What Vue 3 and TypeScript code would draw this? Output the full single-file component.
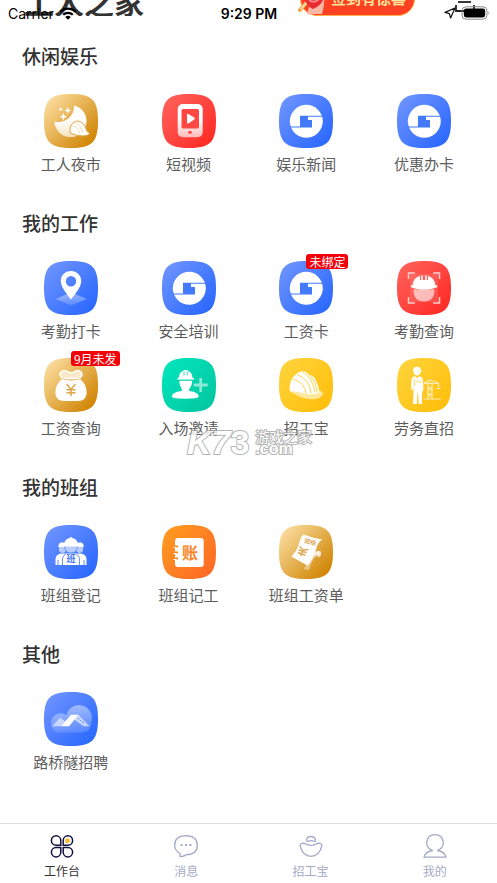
<script setup lang="ts">
import { ref } from 'vue'

type Tone = 'gold' | 'red' | 'blue' | 'teal' | 'yellow' | 'orange'

interface Entry {
  label: string
  icon: string
  tone: Tone
  badge?: string
}

interface Section {
  title: string
  entries: Entry[]
}

const sections: Section[] = [
  {
    title: '休闲娱乐',
    entries: [
      { label: '工人夜市', icon: 'moon', tone: 'gold' },
      { label: '短视频', icon: 'video', tone: 'red' },
      { label: '娱乐新闻', icon: 'brand', tone: 'blue' },
      { label: '优惠办卡', icon: 'brand', tone: 'blue' },
    ],
  },
  {
    title: '我的工作',
    entries: [
      { label: '考勤打卡', icon: 'pin', tone: 'blue' },
      { label: '安全培训', icon: 'brand', tone: 'blue' },
      { label: '工资卡', icon: 'brand', tone: 'blue', badge: '未绑定' },
      { label: '考勤查询', icon: 'scan', tone: 'red' },
      { label: '工资查询', icon: 'bag', tone: 'gold', badge: '9月未发' },
      { label: '入场邀请', icon: 'invite', tone: 'teal' },
      { label: '招工宝', icon: 'helmet', tone: 'yellow' },
      { label: '劳务直招', icon: 'worker', tone: 'yellow' },
    ],
  },
  {
    title: '我的班组',
    entries: [
      { label: '班组登记', icon: 'team', tone: 'blue' },
      { label: '班组记工', icon: 'ledger', tone: 'orange' },
      { label: '班组工资单', icon: 'payslip', tone: 'gold' },
    ],
  },
  {
    title: '其他',
    entries: [{ label: '路桥隧招聘', icon: 'bridge', tone: 'blue' }],
  },
]

const tones: { name: Tone; from: string; to: string }[] = [
  { name: 'gold', from: '#fbdd9f', to: '#d08402' },
  { name: 'red', from: '#ff6059', to: '#ff2c27' },
  { name: 'blue', from: '#6d93ff', to: '#2b69ff' },
  { name: 'teal', from: '#02e5bd', to: '#04c7a0' },
  { name: 'yellow', from: '#ffd33a', to: '#ffbf0d' },
  { name: 'orange', from: '#ff9a1f', to: '#ff6a26' },
]

const tabs = [
  { id: 'desk', label: '工作台' },
  { id: 'message', label: '消息' },
  { id: 'hire', label: '招工宝' },
  { id: 'mine', label: '我的' },
]

const active = ref('desk')
</script>

<template>
  <div class="app">
    <svg class="defs" width="0" height="0" aria-hidden="true">
      <defs>
        <linearGradient v-for="t in tones" :id="'tone-' + t.name" :key="t.name" x1="0.05" y1="0.1" x2="0.9" y2="0.9">
          <stop offset="0" :stop-color="t.from" />
          <stop offset="1" :stop-color="t.to" />
        </linearGradient>
        <linearGradient id="fade-down" x1="0" y1="0" x2="0" y2="1">
          <stop offset="0.45" stop-color="#fff" />
          <stop offset="1" stop-color="#fff" stop-opacity="0.65" />
        </linearGradient>
        <linearGradient id="fade-up" x1="0" y1="0" x2="0" y2="1">
          <stop offset="0" stop-color="#fff" stop-opacity="0.45" />
          <stop offset="1" stop-color="#fff" stop-opacity="0.15" />
        </linearGradient>
      </defs>
    </svg>

    <div class="status">
      <div class="carrier">
        <span>Carrier</span>
        <svg width="18" height="13" viewBox="0 0 18 13" fill="none" stroke="#000" stroke-width="2.2">
          <path d="M1.3 4.8a11 11 0 0 1 15.4 0" />
          <path d="M4.2 7.8a7 7 0 0 1 9.6 0" />
          <path d="M9 12.8 6.2 10a4 4 0 0 1 5.6 0Z" fill="#000" stroke="none" />
        </svg>
      </div>
      <strong class="clock">9:29 PM</strong>
      <div class="power">
        <svg width="12" height="12" viewBox="0 0 12 12" fill="none" stroke="#111" stroke-width="1.2" stroke-linejoin="round">
          <path d="M11 1 6.6 11 5.4 6.6 1 5.4Z" />
        </svg>
        <svg width="29" height="14" viewBox="0 0 29 14">
          <rect x="1" y="0.8" width="25" height="12.4" rx="4" fill="none" stroke="#888" />
          <rect x="2.8" y="2.6" width="21.4" height="8.8" rx="2.4" fill="#000" />
          <path d="M27.600 5q1.600 2 0 4Z" fill="#888" />
        </svg>
      </div>
    </div>

    <header class="hero">
      <h1>工人之家</h1>
      <a class="checkin" href="#checkin">
        <svg class="hand" width="30" height="32" viewBox="0 0 30 32" aria-hidden="true">
          <path d="m2 27 8-9" stroke="#f0a64a" stroke-width="4" stroke-linecap="round" />
          <path d="m3 26 6-7" stroke="#ffe9bd" stroke-width="1.5" stroke-linecap="round" />
          <path d="M9 31q2-10 7-14l10-5q1 9-2 19Z" fill="#f7b9a4" />
          <path d="M6 16q8-6 10-2 8-4 10 1-3 8-11 11-5-2-9-10Z" fill="#e92c32" />
          <path d="M11 17q5 4 10-1" stroke="#ff8582" stroke-width="2" fill="none" />
        </svg>
        <span>签到有惊喜</span>
      </a>
      <a class="scan-link" href="#scan" aria-label="扫一扫">
        <svg width="20" height="20" viewBox="0 0 20 20" fill="none" stroke="#222" stroke-width="1.800">
          <path d="M3 6h13" />
          <path d="M1 9v6h8M19 9v4" />
        </svg>
      </a>
    </header>

    <main class="content">
      <section v-for="section in sections" :key="section.title" class="section">
        <h2>{{ section.title }}</h2>
        <div class="grid">
          <a v-for="entry in section.entries" :key="entry.label" class="entry" href="#entry">
            <svg class="tile" viewBox="0 0 54 54" aria-hidden="true">
              <path d="M27 0C48 0 54 6 54 27S48 54 27 54 0 48 0 27 6 0 27 0Z" :fill="`url(#tone-${entry.tone})`" />

              <g v-if="entry.icon === 'moon'">
                <path d="M30 11.5A16 16 0 1 1 10.5 27.500A15.500 15.500 0 0 0 30 11.500Z" fill="url(#fade-down)" />
                <path d="m16.700 13 .7 1.600 1.600.7-1.600.7-.7 1.600-.7-1.600-1.600-.7 1.600-.7ZM23.800 13l1 2.400 2.400 1-2.400 1-1 2.400-1-2.400-2.400-1 2.400-1ZM19.400 19l1.100 2.600 2.600 1.100-2.600 1.100-1.100 2.600-1.100-2.600-2.600-1.100 2.600-1.100Z" fill="#fff" />
                <path d="M26.200 39C25.200 32 28.500 27.500 33.500 27q6.500 0 9.500 10.500 2.500.8 2.300 2-1 2.600-7.300 2.400-6-.2-11.800-2.900Z" fill="#fff" stroke="#dfa544" />
                <path d="M29 32q6 1.500 7 8M32 29q5.500 3 6.500 9.500" fill="none" stroke="#eccb8f" stroke-width=".7" />
              </g>

              <g v-else-if="entry.icon === 'video'">
                <rect x="15.700" y="10" width="25" height="33.300" rx="5" fill="url(#fade-down)" />
                <rect x="19.500" y="15" width="17.500" height="19.500" rx="1.500" fill="#ff4842" />
                <path d="M25 21.200q0-2 1.800-1l5.400 3.400q1.300 1 0 2l-5.400 3.600q-1.800 1-1.800-1Z" fill="#fff" />
                <ellipse cx="28" cy="38.400" rx="2" ry="1.300" fill="#ff4842" />
              </g>

              <g v-else-if="entry.icon === 'brand'">
                <circle cx="27.300" cy="27.300" r="16.500" fill="#fff" />
                <path d="M21 21.800h23v.9H29V26h4v7.500H11v-.9H21Z" fill="#4379fb" />
              </g>

              <g v-else-if="entry.icon === 'pin'">
                <path d="m27 31.500 15.800 6.500L27 44.500 11.500 38Z" fill="url(#fade-up)" />
                <path fill-rule="evenodd" d="M27 10c6 0 10.200 4.500 10.200 10 0 6-5.200 12-10.200 18.500C22 32 16.800 26 16.800 20 16.800 14.500 21 10 27 10Zm0 5a5.200 5.200 0 1 0 0 10.400A5.200 5.200 0 0 0 27 15Z" fill="#fff" />
              </g>

              <g v-else-if="entry.icon === 'scan'">
                <rect x="13" y="13" width="28" height="28" fill="#fff" opacity=".12" />
                <path d="M11.500 18v-6H18M36 12h6.500v6M42.500 36v6H36M18 42h-6.500v-6" fill="none" stroke="#ffd0cd" stroke-width="1.500" />
                <path d="M16.500 28.500h21Q37.500 40.500 27 40.500T16.500 28.500Z" fill="#fff" opacity=".6" />
                <path d="M13.500 25.500q0-1.200 2.200-1.500.3-7 7.300-9v4h1.200v-4.500h1.600V19h2.400v-4.500h1.600V19H31v-4q6.700 2 7.300 9 2.200.3 2.200 1.500-.5 1-3 1.500-3.500 1.700-10.500 1.700T16.500 27q-2.500-.5-3-1.500Z" fill="#fff" />
              </g>

              <g v-else-if="entry.icon === 'bag'">
                <path d="M18.500 20.500q-4-3.500-1.500-6.500 3.500-3 7 0 3 1.400 6 0 3.500-3 7 0 2.500 3-1.500 6.500Z" fill="#fbe8c8" stroke="#fff" stroke-width="1.500" />
                <path d="M18.500 20.500q8.500 2.500 17 0 7.200 5.500 7.200 14 0 8.500-9.200 8.500H20.500q-9.200 0-9.200-8.500 0-8.500 7.200-14Z" fill="#fff" />
                <path d="M18 20.800q9 3 18 0" fill="none" stroke="#e9c382" stroke-width="1" />
                <path d="m22.600 26 4.400 5.400 4.400-5.400M27 31.500v6.500M22.500 31.800h9M22.500 34.800h9" fill="none" stroke="#dfa443" stroke-width="1.500" />
              </g>

              <g v-else-if="entry.icon === 'invite'">
                <path d="M17.200 22.500h13q0 5-3 8.500v2q9.500 1.400 9.500 5.500 0 2.200-13.500 2.200T9.800 38.500q0-4.100 10-5.500v-2q-2.600-3.500-2.600-8.500Z" fill="#fff" />
                <path d="M15.300 21q0-1.200 1.500-1.200.4-5.800 4.700-7v-.8h4v.8q4.700 1.200 5 7 1.500 0 1.500 1.200v.8H15.300Z" fill="#fff" />
                <path d="M22 13.500v4M25.200 13.500v4M15.500 22.200h16" stroke="#05ceaa" stroke-width=".8" />
                <path d="M38.700 20v14M31.700 27h14" stroke="#b6f4e5" stroke-width="2.800" opacity=".75" />
              </g>

              <g v-else-if="entry.icon === 'helmet'">
                <path d="M10.800 33q3-1 8 0l21-1q5 2 4.300 4.500Q41 41.500 32 41.300 20 40.500 10.800 33Z" fill="#ffe79c" />
                <path d="M10.800 33Q9.500 19 21.500 13.500q5-1.500 8 3 6.500 1.500 8 8 2.500 3.500 2.500 10-7 3.500-15 1-7-2.500-15-2.500Z" fill="#fff" />
                <path d="M14 21q12.500 4 13 15M18 16.500q13 5 14 19M23.500 14Q34 20 36 34.500M30 17q7 6 8 17" fill="none" stroke="#ffd03e" stroke-width=".9" />
              </g>

              <g v-else-if="entry.icon === 'worker'">
                <path d="M16 12.500q0-3.500 3.800-3.800Q24 9 24 12.500q1 .2 1 .8h-1.200Q23.300 17.500 20 17.500t-3.500-4Z" fill="#fff" />
                <path d="M16.800 18.500h2.200l1.200 2 1.800-2h1.500q2.500 1 2.800 7.500v7h-1l-.5 11.500.7 1.500h-3.800l-.6-11h-.6l-.6 11h-4l.6-13V28l-.7 4h-1.500V24q.3-4.500 2.500-5.500Z" fill="#fff" />
                <path d="m19 23 6 1.500M17.500 21v7" stroke="#ffc925" stroke-width=".7" />
                <path d="M26.500 41h17M31 41V25h4v16M27 25.500h15M33 22l-6 3M33 22l8.500 3M31 29l4 4M35 29l-4 4M31 35l4 4M35 35l-4 4M41.500 25.500v4M39.500 30.500h4" fill="none" stroke="#fff" stroke-width="1.200" opacity=".68" />
              </g>

              <g v-else-if="entry.icon === 'team'">
                <path d="M11.500 40v-6q.5-5.500 7-5.500h17q6.500 0 7 5.500v6Z" fill="#fff" />
                <path d="M15 22h7v4q-3.500 4-7 0ZM32 22h7v4q-3.500 4-7 0Z" fill="#b9ccff" />
                <path d="M14.300 22q0-4.500 4-4.800 3.700.3 3.700 4.800ZM32 22q0-4.500 4-4.800 3.800.3 3.800 4.800Z" fill="#fff" />
                <path d="M20.500 20.500h13Q33.500 28 27 28t-6.500-7.500Z" fill="#b9ccff" stroke="#4e7eff" stroke-width=".7" />
                <path d="M19.500 20.500q1-7 6.300-7.500v-.8h2.400v.8q5.300.5 6.300 7.500 1.500.2 1 1h-17q-.5-.8 1-1Z" fill="#fff" />
                <path d="M18.500 40.500v-4q-.5-5.700 3.300-7.500M35.500 40.500v-4q.5-5.700-3.300-7.500M14 35v5M40 35v5" fill="none" stroke="#4e7eff" stroke-width=".9" />
                <text x="27" y="37" font-size="9" font-weight="700" text-anchor="middle" fill="#3f73f8">班</text>
              </g>

              <g v-else-if="entry.icon === 'ledger'">
                <rect x="13" y="13" width="28.700" height="29" rx="3" fill="#fff" />
                <path d="M12 20.500h4v2h-4ZM12 26.500h4v2h-4ZM12 32.500h4v2h-4Z" fill="#ff8822" />
                <path d="M11.500 22.500h3M11.500 28.500h3M11.500 34.500h3" stroke="#fff" />
                <text x="28" y="33.500" font-size="16" font-weight="700" text-anchor="middle" fill="#ff8422">账</text>
              </g>

              <g v-else-if="entry.icon === 'payslip'">
                <path d="M25 44q4-12 10-17.500 4-2 7 .5-1 2.500-6 5.500-3 2.500-6 12.500Z" fill="#fff" opacity=".4" />
                <path d="M24.500 9.500q9 3.500 18.800 5-3.300 1.500-5.300 6.500-1.500 5-3.500 10.500-2.500 5.500-6 9Q21 36.500 12.500 31.500q5-5 7-11 1.500-7.500 5-11Z" fill="#fff" />
                <path d="M31 34q4-7 8-8 4-.5 3 4-1 1.500-3 2.500.5-3-2-2.500-2.500.5-6 4Z" fill="#fff" opacity=".75" />
                <path d="m20.500 21.500 3.700 3.500 5.300-.5M24.200 25l-2.700 6M19.500 24.800l8 3M18.800 27.500l7.500 2.800" stroke="#dca85a" stroke-width="1.500" fill="none" />
                <text x="25" y="17.500" transform="rotate(14 25 17.500)" font-size="6" font-weight="700" fill="#dca75a">班组</text>
              </g>

              <g v-else-if="entry.icon === 'bridge'">
                <path d="M13 40.500a10 10 0 1 1 9.500-17.500 12.800 12.800 0 0 1 25 6q-.5 11.500-10 11.500Z" fill="url(#fade-up)" />
                <path d="m8 34.300 8.200-8.500 5 3.700-4.500 4.800Z" fill="#fff" opacity=".58" />
                <path d="M34.300 22.800 45.500 34.300h-6L30.500 27.500Z" fill="#fff" opacity=".6" />
                <path d="m33.500 26 7 5.500" stroke="#5d8bff" stroke-dasharray="2 1" />
                <path d="m27 22.800h7.500L25 34.300h-8Z" fill="#fff" />
              </g>
            </svg>
            <span v-if="entry.badge" class="badge">{{ entry.badge }}</span>
            <span class="label">{{ entry.label }}</span>
          </a>
        </div>
      </section>
      <div class="watermark" aria-hidden="true">
        <span class="mark-big"><i>K7</i>3</span>
        <span class="mark-side"><span>游戏之家</span><span class="mark-com">.com</span></span>
      </div>
    </main>

    <nav class="tabs">
      <button
        v-for="tab in tabs"
        :key="tab.id"
        type="button"
        class="tab"
        :class="{ active: tab.id === active }"
        @click="active = tab.id"
      >
        <svg width="24" height="24" viewBox="0 0 24 24" fill="none" stroke="currentColor" stroke-width="1.300" aria-hidden="true">
          <g v-if="tab.id === 'desk'" stroke="#10103f" stroke-width="1.500">
            <path d="M10.800 11.200H6a4.700 4.700 0 1 1 4.800-4.700Z" />
            <path d="M13.200 11.200H18a4.700 4.700 0 1 0-4.800-4.700Z" />
            <path d="M10.800 13.500H6a4.700 4.700 0 1 0 4.800 4.700Z" />
            <path d="M13.200 13.500H18a4.700 4.700 0 1 1-4.800 4.700Z" />
            <path d="M15.200 9V6.800A2.400 2.400 0 1 1 17.500 9Z" fill="#fbbb35" stroke="none" />
          </g>
          <g v-else-if="tab.id === 'message'">
            <path d="M6 22.700v-3.200Q.7 16.500.7 11.200.7 2 12 1.700q11.300.3 11.300 9.500T12 20.700q-2 2-6 2Z" />
            <path d="M6.500 11h2M11 11h2M15.500 11h2" stroke-width="2" />
          </g>
          <g v-else-if="tab.id === 'hire'">
            <path d="M7.500 6Q8 2.500 12 2.500T16.500 6q0 1.800-1.800 1.200-2.700-1.200-5.400 0Q7.500 7.800 7.500 6Z" />
            <path d="M2.500 9.500q2-.8 5 .8 4.500 2 9 0 3-1.600 5-.8 2 1 1 3.500Q20 22 12 22.300 4 22 1.500 13q-1-2.500 1-3.500Z" />
          </g>
          <g v-else>
            <path d="M9.500 16.500Q3.500 14 3.700 8.500 4.500.7 12 .7t8.300 7.800q.2 5.500-5.800 8 7.500 1.500 8.500 6.700H1q1-5.200 8.500-6.700Z" stroke-linejoin="round" />
          </g>
        </svg>
        <span>{{ tab.label }}</span>
      </button>
    </nav>
  </div>
</template>

<style>
body {
  background: #fff;
}
</style>

<style scoped>
.app {
  position: relative;
  display: flex;
  flex-direction: column;
  min-height: 100vh;
  overflow: hidden;
  font-family: "Noto Sans CJK SC", sans-serif;
  color: #333;
}
.defs {
  position: absolute;
}
a {
  color: inherit;
  text-decoration: none;
}
.status {
  position: absolute;
  inset: 0 0 auto;
  z-index: 2;
  display: grid;
  grid-template-columns: 1fr auto 1fr;
  align-items: center;
  height: 26px;
  padding: 0 7px 0 8px;
  font-family: Inter, sans-serif;
  font-size: 14px;
  color: #000;
}
.carrier,
.power {
  display: flex;
  align-items: center;
  gap: 5px;
}
.power {
  justify-content: flex-end;
}
.clock {
  font-weight: 600;
}
.hero {
  display: flex;
  align-items: flex-end;
  height: 16px;
  padding: 0 22px 0 24px;
  overflow: hidden;
}
h1 {
  flex: 1;
  margin: 0;
  font-size: 30px;
  line-height: 30px;
  font-weight: 700;
}
.checkin {
  position: relative;
  box-sizing: border-box;
  height: 34px;
  margin-right: 40px;
  padding: 0 8px 0 30px;
  border: 1px solid #ffb04a;
  border-radius: 17px;
  background: #ff4023;
  color: #ffe59c;
  font-size: 15px;
  line-height: 30px;
  font-weight: 700;
}
.hand {
  position: absolute;
  left: -3px;
  bottom: 0;
}
.scan-link {
  height: 20px;
}
.content {
  position: relative;
  flex: 1;
  padding: 26px 14px 34px 12px;
}
.section + .section {
  margin-top: 34px;
}
h2 {
  margin: 0 0 24px;
  padding-left: 10px;
  font-size: 19px;
  line-height: 28px;
  font-weight: 500;
}
.grid {
  display: grid;
  grid-template-columns: repeat(4, 1fr);
  row-gap: 16px;
}
.entry {
  position: relative;
  display: flex;
  flex-direction: column;
  align-items: center;
  gap: 5px;
}
.tile {
  width: 54px;
  height: 54px;
}
.badge {
  position: absolute;
  top: -7px;
  left: 50%;
  padding: 0 3px;
  border-radius: 3px;
  background: #f5000a;
  color: #fff;
  font-size: 12px;
  line-height: 15px;
  white-space: nowrap;
}
.label {
  font-size: 15px;
  line-height: 22px;
  color: #5c5c5c;
  white-space: nowrap;
}
.watermark {
  position: absolute;
  top: 409px;
  left: 187px;
  display: flex;
  align-items: center;
  gap: 6px;
  color: #fff;
  -webkit-text-stroke: 2px #a3a3a3;
  paint-order: stroke fill;
  opacity: 0.8;
  pointer-events: none;
}
.mark-big {
  font: 700 34px/34px "Liberation Sans", sans-serif;
}
.mark-side {
  display: flex;
  flex-direction: column;
  font-size: 14px;
  line-height: 14px;
}
.mark-com {
  font: 700 16px/12px "Liberation Sans", sans-serif;
}
.tabs {
  display: flex;
  height: 59px;
  border-top: 1px solid #dedede;
  background: #fff;
}
.tab {
  flex: 1;
  display: flex;
  flex-direction: column;
  align-items: center;
  gap: 4px;
  padding: 10px 0 0;
  border: 0;
  background: none;
  color: #a4abc6;
  font-family: inherit;
  font-size: 12px;
  line-height: 18px;
}
.tab.active {
  color: #333;
}
</style>
